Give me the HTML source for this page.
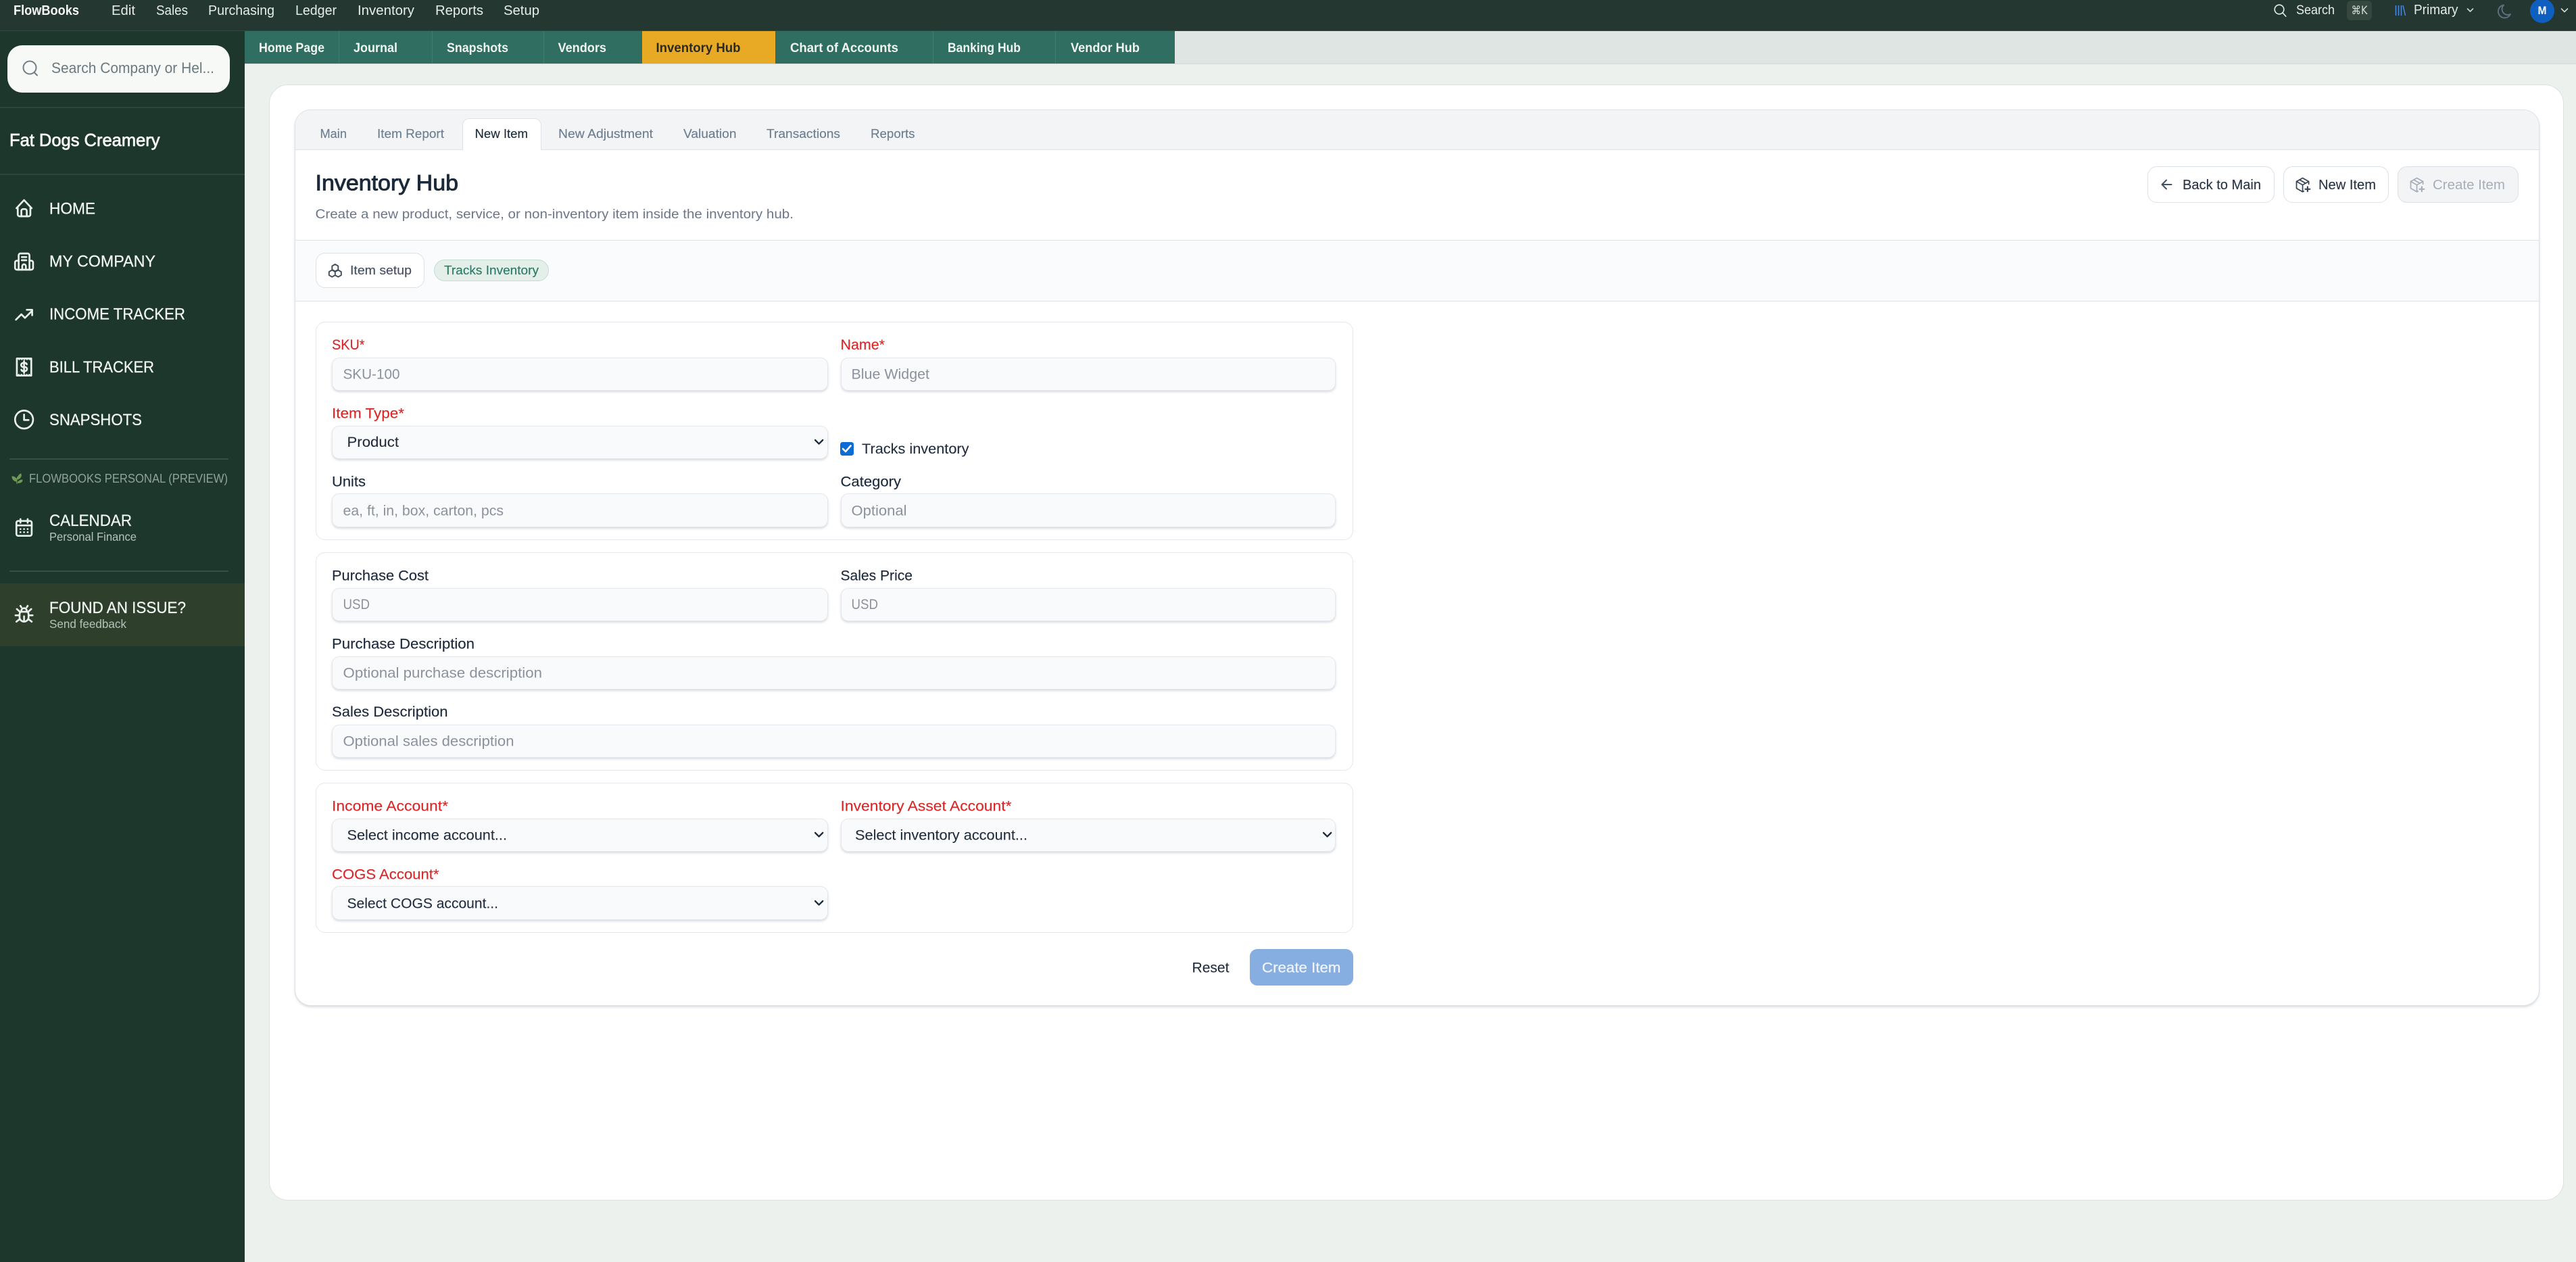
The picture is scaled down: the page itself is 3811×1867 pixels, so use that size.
<!DOCTYPE html>
<html lang="en">
<head>
<meta charset="utf-8">
<title>FlowBooks - Inventory Hub</title>
<style>
html,body{margin:0;padding:0;width:3811px;height:1867px;overflow:hidden;background:#edf1ed;font-family:"Liberation Sans",sans-serif}
.b{position:absolute;box-sizing:border-box}
.inp{background:#f9fafb;border:1.5px solid #e4e8ee;border-radius:11px;box-shadow:0 2px 3px rgba(60,75,95,.2)}
.card{background:#fff;border:1.5px solid #e3e7ed;border-radius:14px}
.btn{background:#fff;border:1.5px solid #dbe1e8;border-radius:14px}
svg{position:absolute;left:0;top:0}
text{font-family:"Liberation Sans",sans-serif}
.top{font-size:20px;fill:#e6ede8}
.tab{font-size:19.5px;font-weight:700;fill:#f0f5f2}
.nav{font-size:24px;fill:#f2f6f3;stroke:#f2f6f3;stroke-width:.25}
.sub{font-size:17.5px;fill:#b4c3ba}
.t2{font-size:18.5px;fill:#6d7e90;stroke:#6d7e90;stroke-width:.15}
.lbl{font-size:21.5px;fill:#1c2a3b;stroke:#1c2a3b;stroke-width:.15}
.req{font-size:21.5px;fill:#dc2626;stroke:#dc2626;stroke-width:.15}
.ph{font-size:21.5px;fill:#8b929d}
.val{font-size:21.5px;fill:#1f2c3d;stroke:#1f2c3d;stroke-width:.1}
.ic{fill:none;stroke:#e9f0eb;stroke-width:2;stroke-linecap:round;stroke-linejoin:round}
.ch{fill:none;stroke:#1c2a3b;stroke-width:2.3;stroke-linecap:round;stroke-linejoin:round}
</style>
</head>
<body>
<!-- top bar -->
<div class="b" style="left:0;top:0;width:3811px;height:46px;background:#243730;border-bottom:1.5px solid #33463e"></div>
<!-- sidebar -->
<div class="b" style="left:0;top:46px;width:362px;height:1821px;background:#1e372d"></div>
<div class="b" style="left:11px;top:67px;width:329px;height:70px;background:#f7f9f6;border-radius:22px"></div>
<div class="b" style="left:0;top:158px;width:362px;height:1.5px;background:#2c463b"></div>
<div class="b" style="left:0;top:257px;width:362px;height:1.5px;background:#2c463b"></div>
<div class="b" style="left:14px;top:678px;width:324px;height:1.5px;background:#37503f"></div>
<div class="b" style="left:14px;top:844px;width:324px;height:1.5px;background:#37503f"></div>
<div class="b" style="left:0;top:863px;width:362px;height:93px;background:#2e3f2c"></div>
<!-- tab bar -->
<div class="b" style="left:362px;top:46px;width:3449px;height:49px;background:#dfe5e2;border-bottom:1.5px solid #d2d9d6"></div>
<div class="b" style="left:362px;top:46px;width:1376px;height:48px;background:#2f6e60"></div>
<div class="b" style="left:950px;top:46px;width:197px;height:48px;background:#e8aa24"></div>
<div class="b" style="left:501px;top:46px;width:1px;height:48px;background:#3f7c6e"></div>
<div class="b" style="left:639px;top:46px;width:1px;height:48px;background:#3f7c6e"></div>
<div class="b" style="left:804px;top:46px;width:1px;height:48px;background:#3f7c6e"></div>
<div class="b" style="left:1380px;top:46px;width:1px;height:48px;background:#3f7c6e"></div>
<div class="b" style="left:1561px;top:46px;width:1px;height:48px;background:#3f7c6e"></div>
<!-- main card -->
<div class="b" style="left:398px;top:125px;width:3395px;height:1651px;background:#fff;border:1.5px solid #dde2de;border-radius:28px"></div>
<!-- inner card -->
<div class="b" style="left:436px;top:162px;width:3321px;height:1326px;background:#fff;border:1.5px solid #dde3e9;border-radius:24px;box-shadow:0 2px 3px rgba(60,75,95,.2);overflow:hidden">
  <div class="b" style="left:0;top:0;width:100%;height:59px;background:#f2f4f6;border-bottom:1.5px solid #dde3e9"></div>
  <div class="b" style="left:0;top:192px;width:100%;height:91px;background:#fafbfd;border-top:1.5px solid #dde3e9;border-bottom:1.5px solid #dde3e9"></div>
</div>
<div class="b" style="left:684px;top:175px;width:117px;height:47px;background:#fff;border:1.5px solid #dde3e9;border-bottom:none;border-radius:10px 10px 0 0"></div>
<div class="b btn" style="left:467px;top:374px;width:161px;height:52px"></div>
<div class="b" style="left:642px;top:384px;width:170px;height:32px;background:#e5efea;border:1.5px solid #c3ddd3;border-radius:16px"></div>
<div class="b btn" style="left:3176.5px;top:246px;width:188px;height:54px"></div>
<div class="b btn" style="left:3377.5px;top:246px;width:156px;height:54px"></div>
<div class="b btn" style="left:3546.5px;top:246px;width:179.5px;height:54px;background:#f2f4f6"></div>
<div class="b" style="left:3472px;top:1px;width:37px;height:29px;background:#364740;border-radius:6px"></div>
<div class="b" style="left:3743px;top:-2px;width:36px;height:36px;background:#0e5fc0;border-radius:50%"></div>
<!-- form cards -->
<div class="b card" style="left:466.5px;top:476px;width:1535px;height:323px"></div>
<div class="b card" style="left:466.5px;top:817px;width:1535px;height:322.5px"></div>
<div class="b card" style="left:466.5px;top:1158px;width:1535px;height:221.5px"></div>
<!-- inputs -->
<div class="b inp" style="left:491px;top:528.5px;width:733.5px;height:49.5px"></div>
<div class="b inp" style="left:1243.5px;top:528.5px;width:732.5px;height:49.5px"></div>
<div class="b inp" style="left:491px;top:629.5px;width:733.5px;height:49.5px"></div>
<div class="b inp" style="left:491px;top:730px;width:733.5px;height:49.5px"></div>
<div class="b inp" style="left:1243.5px;top:730px;width:732.5px;height:49.5px"></div>
<div class="b inp" style="left:491px;top:869.5px;width:733.5px;height:49.5px"></div>
<div class="b inp" style="left:1243.5px;top:869.5px;width:732.5px;height:49.5px"></div>
<div class="b inp" style="left:491px;top:970.5px;width:1485px;height:49.5px"></div>
<div class="b inp" style="left:491px;top:1071.5px;width:1485px;height:49.5px"></div>
<div class="b inp" style="left:491px;top:1210.5px;width:733.5px;height:49.5px"></div>
<div class="b inp" style="left:1243.5px;top:1210.5px;width:732.5px;height:49.5px"></div>
<div class="b inp" style="left:491px;top:1311px;width:733.5px;height:49.5px"></div>
<div class="b" style="left:1243px;top:654px;width:19.5px;height:19.5px;background:#0d6bd8;border-radius:3.5px"></div>
<div class="b" style="left:1848.5px;top:1404px;width:153px;height:54px;background:#86aee0;border-radius:11px"></div>

<svg width="3811" height="1867" viewBox="0 0 3811 1867" xmlns="http://www.w3.org/2000/svg">
<!-- top bar text -->
<text x="20" y="22" textLength="97" lengthAdjust="spacingAndGlyphs" font-size="20" font-weight="700" fill="#f5f8f6">FlowBooks</text>
<text class="top" x="165" y="22" textLength="35" lengthAdjust="spacingAndGlyphs">Edit</text>
<text class="top" x="231" y="22" textLength="47" lengthAdjust="spacingAndGlyphs">Sales</text>
<text class="top" x="308" y="22" textLength="98" lengthAdjust="spacingAndGlyphs">Purchasing</text>
<text class="top" x="437" y="22" textLength="61" lengthAdjust="spacingAndGlyphs">Ledger</text>
<text class="top" x="529" y="22" textLength="84" lengthAdjust="spacingAndGlyphs">Inventory</text>
<text class="top" x="644" y="22" textLength="71" lengthAdjust="spacingAndGlyphs">Reports</text>
<text class="top" x="745" y="22" textLength="53" lengthAdjust="spacingAndGlyphs">Setup</text>
<g transform="translate(3363.5,5.5) scale(.85)" fill="none" stroke="#e6ede8" stroke-width="1.9" stroke-linecap="round"><circle cx="10" cy="10" r="8"/><path d="M16 16l5.5 6"/></g>
<text class="top" x="3397" y="21" textLength="57" lengthAdjust="spacingAndGlyphs" style="font-size:19px">Search</text>
<text x="3478.5" y="21" textLength="24" lengthAdjust="spacingAndGlyphs" font-size="17" fill="#d3ddd7" style="font-family:'DejaVu Sans',sans-serif">⌘K</text>
<path d="M3544.5 8v15M3548.5 8v15M3552.5 8v15M3555 8l3.5 15" fill="none" stroke="#4a8ae0" stroke-width="1.5"/>
<text class="top" x="3571" y="21" textLength="65.5" lengthAdjust="spacingAndGlyphs">Primary</text>
<path d="M3650.5 13l4 4 4-4" fill="none" stroke="#cfd9d3" stroke-width="1.6" stroke-linecap="round" stroke-linejoin="round"/>
<path d="M3704 7.5a9.5 9.5 0 1 0 10 13.5a8.5 8.5 0 0 1-10-13.5z" fill="none" stroke="#5d6f80" stroke-width="2" stroke-linejoin="round"/>
<text x="3754.5" y="21" font-size="17" font-weight="700" fill="#fff" textLength="13" lengthAdjust="spacingAndGlyphs">M</text>
<path d="M3789.5 13l4.5 4.5 4.5-4.5" fill="none" stroke="#cfd9d3" stroke-width="1.6" stroke-linecap="round" stroke-linejoin="round"/>

<!-- tab labels -->
<text class="tab" x="383" y="77" textLength="97" lengthAdjust="spacingAndGlyphs">Home Page</text>
<text class="tab" x="523" y="77" textLength="65" lengthAdjust="spacingAndGlyphs">Journal</text>
<text class="tab" x="661" y="77" textLength="91" lengthAdjust="spacingAndGlyphs">Snapshots</text>
<text class="tab" x="825.5" y="77" textLength="71.5" lengthAdjust="spacingAndGlyphs">Vendors</text>
<text class="tab" x="970.5" y="77" textLength="125" lengthAdjust="spacingAndGlyphs" style="fill:#2a2a22">Inventory Hub</text>
<text class="tab" x="1169" y="77" textLength="160" lengthAdjust="spacingAndGlyphs">Chart of Accounts</text>
<text class="tab" x="1402" y="77" textLength="108" lengthAdjust="spacingAndGlyphs">Banking Hub</text>
<text class="tab" x="1584" y="77" textLength="102" lengthAdjust="spacingAndGlyphs">Vendor Hub</text>

<!-- sidebar search -->
<g fill="none" stroke="#6f7f83" stroke-width="2" stroke-linecap="round"><circle cx="44" cy="100" r="9.5"/><path d="M51 107.5l4 4"/></g>
<text x="76" y="108" font-size="22" fill="#6b7a80" textLength="241" lengthAdjust="spacingAndGlyphs">Search Company or Hel...</text>
<text x="14" y="216" font-size="26" fill="#f7faf8" stroke="#f7faf8" stroke-width=".7" textLength="222.5" lengthAdjust="spacingAndGlyphs">Fat Dogs Creamery</text>

<!-- nav -->
<text class="nav" x="73" y="316.5" textLength="68" lengthAdjust="spacingAndGlyphs">HOME</text>
<text class="nav" x="73" y="394.5" textLength="157" lengthAdjust="spacingAndGlyphs">MY COMPANY</text>
<text class="nav" x="73" y="472.5" textLength="201" lengthAdjust="spacingAndGlyphs">INCOME TRACKER</text>
<text class="nav" x="73" y="551" textLength="155" lengthAdjust="spacingAndGlyphs">BILL TRACKER</text>
<text class="nav" x="73" y="629" textLength="137" lengthAdjust="spacingAndGlyphs">SNAPSHOTS</text>
<text x="43" y="714" font-size="18" fill="#8fa399" textLength="294" lengthAdjust="spacingAndGlyphs">FLOWBOOKS PERSONAL (PREVIEW)</text>
<text class="nav" x="73" y="778" textLength="122" lengthAdjust="spacingAndGlyphs">CALENDAR</text>
<text class="sub" x="73" y="800" textLength="129" lengthAdjust="spacingAndGlyphs">Personal Finance</text>
<text class="nav" x="73" y="907" textLength="202" lengthAdjust="spacingAndGlyphs">FOUND AN ISSUE?</text>
<text class="sub" x="73" y="929" textLength="114" lengthAdjust="spacingAndGlyphs">Send feedback</text>

<!-- nav icons -->
<g class="ic" transform="translate(19.6,292) scale(1.333)"><path d="M5 12H3.6L12 3l8.4 9H19"/><path d="M5 12v7a2 2 0 0 0 2 2h10a2 2 0 0 0 2-2v-7"/><path d="M9 21v-6a2 2 0 0 1 2-2h2a2 2 0 0 1 2 2v6"/></g>
<g class="ic" transform="translate(19.6,371) scale(1.333)"><path d="M6 11H4a2 2 0 0 0-2 2v6a2 2 0 0 0 2 2h16a2 2 0 0 0 2-2v-6a2 2 0 0 0-2-2h-2"/><path d="M6 21V5a2 2 0 0 1 2-2h8a2 2 0 0 1 2 2v16"/><path d="M9.5 7h5M9.5 10.5h5"/><path d="M10 21v-4a2 2 0 0 1 4 0v4"/></g>
<g class="ic" transform="translate(19.6,449) scale(1.333)"><path d="M3 18l6-6 4 4 8-8"/><path d="M15 7h6v6"/></g>
<g class="ic" transform="translate(19.6,527) scale(1.333)"><path d="M4 2.5h2l.6.8.6-.8h1.7l.6.8.6-.8h1.7l.6.8.6-.8h1.7l.6.8.6-.8h1.7l.6.8.6-.8H20v19h-1.5l-.6-.8-.6.8h-1.7l-.6-.8-.6.8h-1.7l-.6-.8-.6.8H9.6l-.6-.8-.6.8H6.7l-.6-.8-.6.8H4z"/><path d="M15 9a2 2 0 0 0-2-1.5h-2a2.2 2.2 0 0 0 0 4.5h2a2.2 2.2 0 0 1 0 4.5h-2a2 2 0 0 1-2-1.5"/><path d="M12 5.5v13"/></g>
<g class="ic" transform="translate(19.6,604.7) scale(1.333)"><circle cx="12" cy="12" r="10"/><path d="M12 6.5V12.5h5"/></g>
<g class="ic" transform="translate(19.6,764) scale(1.333)"><rect x="3.5" y="5" width="17" height="16.5" rx="2"/><path d="M16 3v4M8 3v4M3.5 10h17"/><path d="M8 14h.01M12 14h.01M16 14h.01M8 17.5h.01M12 17.5h.01M16 17.5h.01"/></g>
<g class="ic" transform="translate(19.6,893) scale(1.333)"><path d="M9 9V8a3 3 0 0 1 6 0v1"/><path d="M8 9h8a6 6 0 0 1 1 3v3a5 5 0 0 1-10 0v-3a6 6 0 0 1 1-3"/><path d="M2.5 13H7M17 13h4.5M12 20v-6M3.5 20l3.85-3M20.5 20l-3.85-3M4 6l3.75 3.4M20 6l-3.75 3.4"/><path d="M9 4L8 2.5M15 4l1-1.5"/></g>
<path d="M25 716c-1-5 0-8 1-11M25 712c-4 0-7-3-7-7 4 0 7 3 7 7zM26 709c0-4 2-7 5-8 1 4-1 7-5 8zM26 714c2-3 4-4 7-4 0 3-3 5-7 4z" fill="#6f9a55" stroke="#6f9a55" stroke-width="1"/>

<!-- inner tabs -->
<text class="t2" x="473.5" y="204" textLength="39.5" lengthAdjust="spacingAndGlyphs">Main</text>
<text class="t2" x="558" y="204" textLength="99" lengthAdjust="spacingAndGlyphs">Item Report</text>
<text class="t2" x="702.5" y="204" textLength="78.5" lengthAdjust="spacingAndGlyphs" style="fill:#1c2b3a;stroke:#1c2b3a">New Item</text>
<text class="t2" x="826" y="204" textLength="140" lengthAdjust="spacingAndGlyphs">New Adjustment</text>
<text class="t2" x="1011" y="204" textLength="78.5" lengthAdjust="spacingAndGlyphs">Valuation</text>
<text class="t2" x="1134" y="204" textLength="109" lengthAdjust="spacingAndGlyphs">Transactions</text>
<text class="t2" x="1288" y="204" textLength="65.5" lengthAdjust="spacingAndGlyphs">Reports</text>

<!-- header -->
<text x="466.5" y="281.5" font-size="32" fill="#1a2a3a" stroke="#1a2a3a" stroke-width=".9" textLength="211.5" lengthAdjust="spacingAndGlyphs">Inventory Hub</text>
<text x="466.5" y="323" font-size="19.5" fill="#6b7688" textLength="707.5" lengthAdjust="spacingAndGlyphs">Create a new product, service, or non-inventory item inside the inventory hub.</text>

<!-- toolbar -->
<g fill="none" stroke="#3f4b58" stroke-width="1.9" stroke-linejoin="round"><path d="M495.8 391l4.5 2.6v5.2l-4.5 2.6-4.5-2.6v-5.2zM491.3 399.5l4.5 2.6v5l-4.5 2.6-4.5-2.6v-5zM500.3 399.5l4.5 2.6v5l-4.5 2.6-4.5-2.6v-5z"/></g>
<text x="518" y="406" font-size="18.5" fill="#44505f" stroke="#44505f" stroke-width=".15" textLength="91" lengthAdjust="spacingAndGlyphs">Item setup</text>
<text x="657" y="406" font-size="18.5" fill="#2b7a65" stroke="#2b7a65" stroke-width=".15" textLength="140" lengthAdjust="spacingAndGlyphs">Tracks Inventory</text>

<!-- right buttons -->
<path d="M3198.5 273h14M3198.5 273l6.5 6.5M3198.5 273l6.5-6.5" fill="none" stroke="#455264" stroke-width="2" stroke-linecap="round" stroke-linejoin="round"/>
<text x="3229" y="280" font-size="20" fill="#2a3646" stroke="#2a3646" stroke-width=".15" textLength="116" lengthAdjust="spacingAndGlyphs">Back to Main</text>
<g fill="none" stroke="#364354" stroke-width="1.5" stroke-linecap="round" stroke-linejoin="round" transform="translate(3393,260) scale(1.13)"><path d="M20 11V7.5L12 3 4 7.5v9l8 4.5 1.5-.8"/><path d="M4 7.5l8 4.5 8-4.5M12 12v9M8 5.3l8 4.5"/><path d="M15.5 17.5h6M18.5 14.5v6" stroke-width="1.9"/></g>
<text x="3430" y="280" font-size="20" fill="#2a3646" stroke="#2a3646" stroke-width=".15" textLength="85" lengthAdjust="spacingAndGlyphs">New Item</text>
<g fill="none" stroke="#a5aeb9" stroke-width="1.5" stroke-linecap="round" stroke-linejoin="round" transform="translate(3562,260) scale(1.13)"><path d="M20 11V7.5L12 3 4 7.5v9l8 4.5 1.5-.8"/><path d="M4 7.5l8 4.5 8-4.5M12 12v9M8 5.3l8 4.5"/><path d="M15.5 17.5h6M18.5 14.5v6" stroke-width="1.9"/></g>
<text x="3599" y="280" font-size="20" fill="#a5aeb9" textLength="107" lengthAdjust="spacingAndGlyphs">Create Item</text>

<!-- form labels -->
<text class="req" x="491" y="517" textLength="48.5" lengthAdjust="spacingAndGlyphs">SKU*</text>
<text class="req" x="1243.5" y="517" textLength="65.5" lengthAdjust="spacingAndGlyphs">Name*</text>
<text class="ph" x="507.5" y="560.5" textLength="84" lengthAdjust="spacingAndGlyphs">SKU-100</text>
<text class="ph" x="1259.5" y="560.5" textLength="115.5" lengthAdjust="spacingAndGlyphs">Blue Widget</text>
<text class="req" x="491" y="618.5" textLength="107" lengthAdjust="spacingAndGlyphs">Item Type*</text>
<text class="val" x="513.5" y="661" textLength="76.5" lengthAdjust="spacingAndGlyphs">Product</text>
<path class="ch" d="M1206 651l5.6 5.6 5.6-5.6"/>
<path d="M1247 664l4 4 7.5-8.5" fill="none" stroke="#fff" stroke-width="2.6" stroke-linecap="round" stroke-linejoin="round"/>
<text class="val" x="1275" y="671" textLength="158.5" lengthAdjust="spacingAndGlyphs">Tracks inventory</text>
<text class="lbl" x="491" y="719.5" textLength="50" lengthAdjust="spacingAndGlyphs">Units</text>
<text class="lbl" x="1243.5" y="719.5" textLength="89.5" lengthAdjust="spacingAndGlyphs">Category</text>
<text class="ph" x="507.5" y="762.5" textLength="237.5" lengthAdjust="spacingAndGlyphs">ea, ft, in, box, carton, pcs</text>
<text class="ph" x="1259.5" y="762.5" textLength="82" lengthAdjust="spacingAndGlyphs">Optional</text>

<text class="lbl" x="491" y="858.5" textLength="143" lengthAdjust="spacingAndGlyphs">Purchase Cost</text>
<text class="lbl" x="1243.5" y="858.5" textLength="106.5" lengthAdjust="spacingAndGlyphs">Sales Price</text>
<text class="ph" x="507.5" y="901" textLength="39.5" lengthAdjust="spacingAndGlyphs">USD</text>
<text class="ph" x="1259.5" y="901" textLength="39.5" lengthAdjust="spacingAndGlyphs">USD</text>
<text class="lbl" x="491" y="959.5" textLength="211" lengthAdjust="spacingAndGlyphs">Purchase Description</text>
<text class="ph" x="507.5" y="1002.5" textLength="294.5" lengthAdjust="spacingAndGlyphs">Optional purchase description</text>
<text class="lbl" x="491" y="1060" textLength="171.5" lengthAdjust="spacingAndGlyphs">Sales Description</text>
<text class="ph" x="507.5" y="1103.5" textLength="253" lengthAdjust="spacingAndGlyphs">Optional sales description</text>

<text class="req" x="491" y="1199.5" textLength="172" lengthAdjust="spacingAndGlyphs">Income Account*</text>
<text class="req" x="1243.5" y="1199.5" textLength="253" lengthAdjust="spacingAndGlyphs">Inventory Asset Account*</text>
<text class="val" x="513.5" y="1242.5" textLength="236.5" lengthAdjust="spacingAndGlyphs">Select income account...</text>
<text class="val" x="1265" y="1242.5" textLength="255" lengthAdjust="spacingAndGlyphs">Select inventory account...</text>
<path class="ch" d="M1206 1232l5.6 5.6 5.6-5.6"/>
<path class="ch" d="M1958 1232l5.6 5.6 5.6-5.6"/>
<text class="req" x="491" y="1300.5" textLength="158.5" lengthAdjust="spacingAndGlyphs">COGS Account*</text>
<text class="val" x="513.5" y="1343.5" textLength="223.5" lengthAdjust="spacingAndGlyphs">Select COGS account...</text>
<path class="ch" d="M1206 1333l5.6 5.6 5.6-5.6"/>

<text class="val" x="1763.5" y="1438.5" textLength="55" lengthAdjust="spacingAndGlyphs">Reset</text>
<text x="1867" y="1438.5" font-size="21.5" fill="#f0f4fa" stroke="#f0f4fa" stroke-width=".3" textLength="116.5" lengthAdjust="spacingAndGlyphs">Create Item</text>
</svg>
</body>
</html>
